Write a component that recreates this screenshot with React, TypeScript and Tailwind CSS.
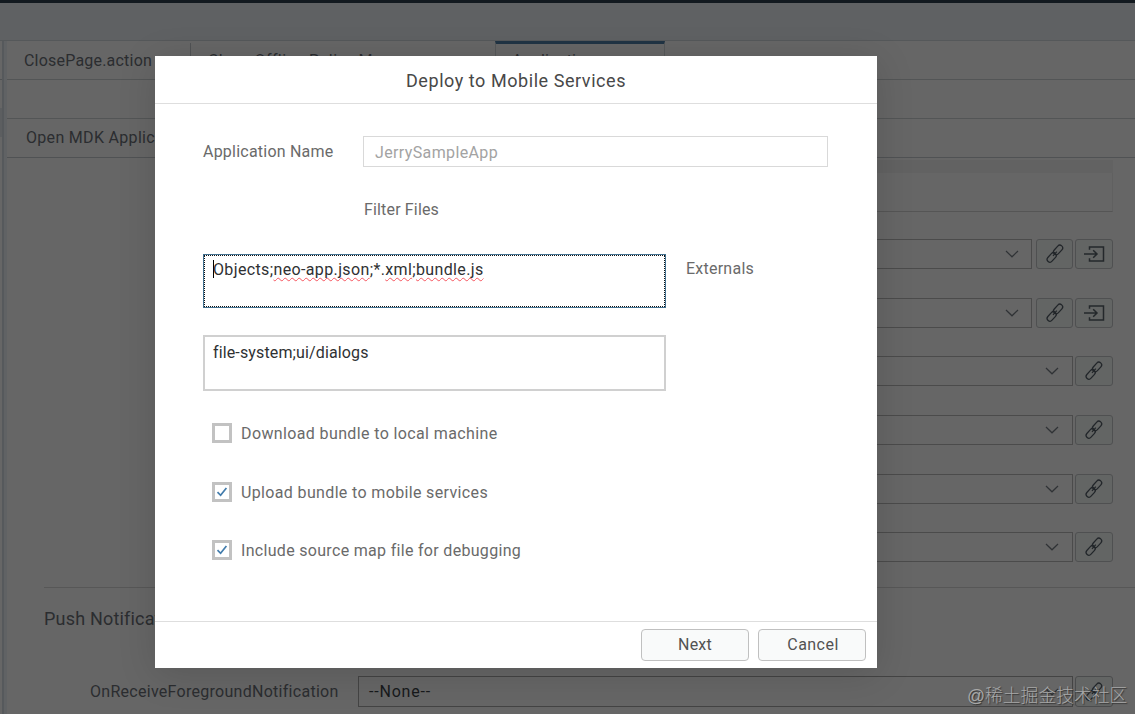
function LinkIcon() {
  return (
    <svg width="20" height="22" viewBox="0 0 20 22" fill="none" stroke="#22262a" strokeWidth="1.25">
      <rect x="-2.8" y="-5.4" width="5.6" height="10.8" rx="2.8" transform="translate(13.1 6.9) rotate(42)" />
      <rect x="-2.8" y="-5.4" width="5.6" height="10.8" rx="2.8" transform="translate(6.7 14.4) rotate(42)" />
      <path d="M8 12.8 11.8 8.6" />
    </svg>
  );
}

function EnterIcon() {
  return (
    <svg width="22" height="18" viewBox="0 0 22 18" fill="none" stroke="#24282b" strokeWidth="1.5">
      <path d="M6.5 4.8V2H20.5V16H6.5V13.2" />
      <path d="M1 9H14M10.2 5.2 14 9 10.2 12.8" />
    </svg>
  );
}

function Chevron() {
  return (
    <svg width="14" height="8" viewBox="0 0 14 8" fill="none" stroke="#303336" strokeWidth="1.2">
      <path d="M1 1 7 6.8 13 1" />
    </svg>
  );
}

function SelectRow({ enter = false }: { enter?: boolean }) {
  return (
    <div className="flex h-[58.7px] shrink-0 items-start">
      <div className={`flex h-[30px] flex-1 items-center justify-end border border-[#4b4b4b] ${enter ? "pr-[12px]" : "pr-[13px]"}`}>
        <Chevron />
      </div>
      {enter && (
        <button className="ml-[4px] flex h-[30px] w-[37px] items-center justify-center rounded-[3px] border border-[#4f5051] bg-[#636564]">
          <LinkIcon />
        </button>
      )}
      <button className="ml-[2px] flex h-[30px] w-[38px] items-center justify-center rounded-[3px] border border-[#4f5051] bg-[#636564]">
        {enter ? <EnterIcon /> : <LinkIcon />}
      </button>
    </div>
  );
}

function EditorPage() {
  return (
    <div className="flex h-[714px] w-[1135px] flex-col bg-[#666666] text-[#2b2d30]">
      <div className="h-[3px] bg-[#12191f]" />
      <div className="h-[38px] border-b border-[#55585a] bg-[#5f6163]" />
      <div className="flex min-h-0 flex-1">
        <div className="flex w-[2px] flex-col">
          <div className="h-[39px] border-b border-[#505254]" />
          <div className="h-[28px]" />
          <div className="h-[29px] bg-[#5c5e60]" />
        </div>
        <div className="w-[5px] border-l-2 border-[#56595c] bg-[#606264]" />
        <div className="flex min-w-0 flex-1 flex-col">
          <div className="flex h-[39px] border-b border-[#535556]">
            <div className="w-[183px] pl-[17px] pt-[8px] text-[16px] leading-6 tracking-[0.204px]">ClosePage.action</div>
            <div className="mt-[2px] h-[34px] w-px bg-[#505254]" />
            <div className="w-[304px] pl-[17px] pt-[8px] text-[16px] leading-6 tracking-[0.4px]">Close Offline Policy M</div>
            <div className="w-[170px] border-x border-t-[3px] border-x-[#565859] border-t-[#203444] pl-[16px] pt-[5px] text-[16px] leading-6 tracking-[0.2px]">
              Application
            </div>
          </div>
          <div className="h-[39px] border-b border-[#535556]" />
          <div className="h-[39px] border-b border-[#505254] pl-[19px] pt-[7px] text-[16px] leading-6 tracking-[0.311px]">
            Open MDK Application
          </div>
          <div className="ml-[351px] mr-[22px] mt-[2px] h-[13px] bg-[#626262]" />
          <div className="ml-[351px] mr-[22px] h-[39px] border-b border-r border-b-[#555555] border-r-[#606060]" />
          <div className="ml-[351px] mr-[22px] mt-[27px] flex h-[348px] flex-col">
            <SelectRow enter />
            <SelectRow enter />
            <SelectRow />
            <SelectRow />
            <SelectRow />
            <SelectRow />
          </div>
          <div className="ml-[37px] h-px bg-[#575757]" />
          <div className="ml-[37px] mt-[19px] h-[69px] text-[18px] leading-6 tracking-[0.191px]">Push Notifications</div>
          <div className="mr-[22px] flex h-[31px] items-center">
            <div className="w-[351px] pl-[83px] text-[16px] leading-6 tracking-[0.278px]">OnReceiveForegroundNotification</div>
            <div className="flex h-[31px] flex-1 items-center justify-between border border-[#444444] pl-[10px] pr-[13px] text-[16px] leading-6 tracking-[0.8px] text-[#17191b]">
              --None--
              <Chevron />
            </div>
            <div className="ml-[2px] flex h-[31px] w-[38px] items-center justify-center rounded-[3px] border border-[#4b4c4d] bg-[#636564]">
              <LinkIcon />
            </div>
          </div>
        </div>
      </div>
    </div>
  );
}

function CheckRow({ label, checked, spacing }: { label: string; checked: boolean; spacing: string }) {
  return (
    <label className="flex h-[58.6px] items-start">
      <span className="mt-px flex h-[20px] w-[20px] items-center justify-center border-[3px] border-[#c2c2c2] bg-white">
        {checked && (
          <svg width="12" height="12" viewBox="0 0 12 12" fill="none" stroke="#427cac" strokeWidth="1.7">
            <path d="M1.5 6.2 4.6 9.3 10.4 2" />
          </svg>
        )}
      </span>
      <span className={`ml-[9px] text-[16px] leading-6 ${spacing}`}>{label}</span>
    </label>
  );
}

function Misspelled({ children }: { children: string }) {
  return (
    <span className="underline decoration-[#f5555f] decoration-wavy decoration-[1px] underline-offset-[2px] [text-decoration-skip-ink:none]">
      {children}
    </span>
  );
}

function DeployDialog() {
  return (
    <div className="absolute left-[155px] top-[56px] flex h-[612px] w-[722px] flex-col bg-white text-[#6a6a6a] shadow-[0_6px_36px_rgba(0,0,0,0.14)]">
      <div className="h-[48px] border-b border-[#dedede] pt-[13px] text-center text-[18px] leading-6 tracking-[0.556px] text-[#484848]">
        Deploy to Mobile Services
      </div>
      <div className="flex flex-1 flex-col pl-[48px] pr-[49px]">
        <div className="mt-[32px] flex h-[31px]">
          <div className="w-[160px] pt-[4px] text-[16px] leading-6 tracking-[0.222px]">Application Name</div>
          <div className="flex-1 border border-[#d9d9d9] pl-[11px] pt-[4px] text-[16px] leading-6 tracking-[0.366px] text-[#a3a3a3]">
            JerrySampleApp
          </div>
        </div>
        <div className="mt-[31px] h-[24px] pl-[161px] text-[16px] leading-6 tracking-[0.158px]">Filter Files</div>
        <div className="mt-[32px] flex h-[54px]">
          <div className="w-[463px] border border-[#42708f] text-[#2f3133]">
            <div className="h-full border border-dotted border-[#101214] pl-[8px] pt-[2px]">
              <div className="flex text-[16px] leading-6 tracking-[0.363px]">
                <span className="mt-[2px] h-[18px] w-px bg-black" />
                <span className="-ml-px whitespace-nowrap">
                  Objects;<Misspelled>neo-app.json</Misspelled>;*.<Misspelled>xml</Misspelled>;<Misspelled>bundle.js</Misspelled>
                </span>
              </div>
            </div>
          </div>
          <div className="pl-[20px] pt-[3px] text-[16px] leading-6 tracking-[0.238px]">Externals</div>
        </div>
        <div className="mt-[27px] h-[56px] w-[463px] border-2 border-[#d0d0d0] pl-[8px] pt-[4px] text-[16px] leading-6 tracking-[0.133px] text-[#2f3133]">
          file-system;ui/dialogs
        </div>
        <div className="mt-[31px] flex flex-col pl-[9px]">
          <CheckRow label="Download bundle to local machine" checked={false} spacing="tracking-[0.376px]" />
          <CheckRow label="Upload bundle to mobile services" checked spacing="tracking-[0.354px]" />
          <CheckRow label="Include source map file for debugging" checked spacing="tracking-[0.31px]" />
        </div>
      </div>
      <div className="flex h-[47px] justify-end gap-[9px] border-t border-[#dedede] pr-[11px] pt-[7px] text-[#525252]">
        <button className="h-[32px] w-[108px] rounded-[4px] border border-[#c0c0c0] bg-[#f9fafa] pb-px text-[16px] leading-6 tracking-[0.23px]">Next</button>
        <button className="h-[32px] w-[108px] rounded-[4px] border border-[#c0c0c0] bg-[#f9fafa] pb-px pl-[2px] text-[16px] leading-6 tracking-[0.466px]">Cancel</button>
      </div>
    </div>
  );
}

export default function App() {
  return (
    <div className="relative h-[714px] w-[1135px] overflow-hidden font-['Roboto','Noto_Sans_CJK_SC',sans-serif]">
      <EditorPage />
      <DeployDialog />
      <div className="absolute left-[967px] top-[682px] whitespace-nowrap font-['Liberation_Sans','Noto_Sans_CJK_SC',sans-serif] text-[17.8px] font-light leading-[28px] text-[#a8a8a8] [text-shadow:1px_1px_1px_#333]">
        @稀土掘金技术社区
      </div>
    </div>
  );
}
